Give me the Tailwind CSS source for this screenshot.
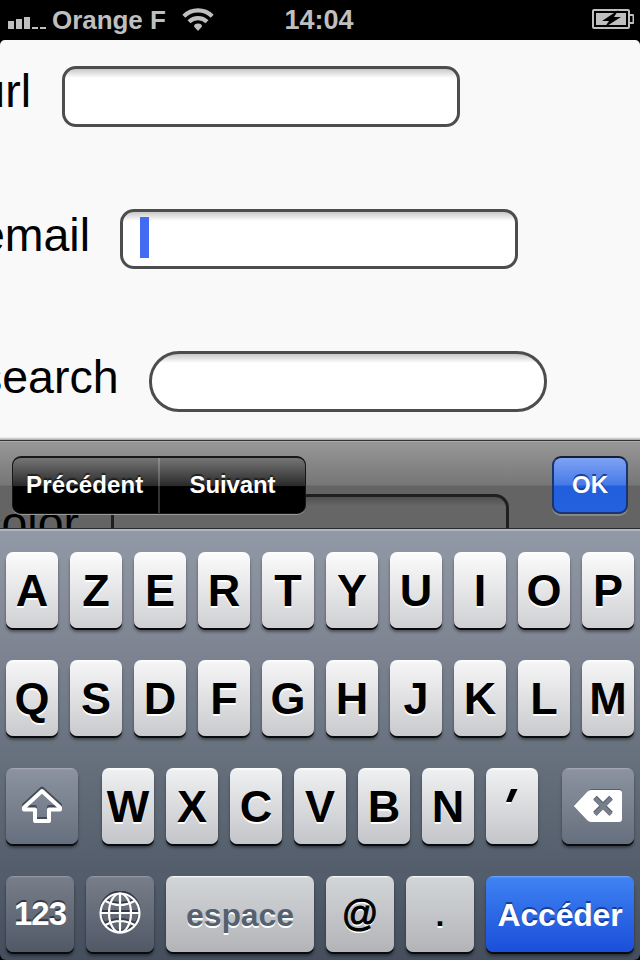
<!DOCTYPE html>
<html lang="fr">
<head>
<meta charset="utf-8">
<title>Formulaire</title>
<script src="https://cdn.jsdelivr.net/npm/@tailwindcss/browser@4"></script>
</head>
<body class="bg-black">
<div class="w-[640px] h-[960px] overflow-hidden flex flex-col bg-black font-['Liberation_Sans',Arial,sans-serif]">

  <!-- Status bar -->
  <header class="h-10 shrink-0 grid grid-cols-[1fr_auto_1fr] items-center text-[#bfbfbf] font-bold text-[26px] leading-10">
    <div class="flex items-center pl-2">
      <svg class="w-[38px] h-[12px] mt-[6px] shrink-0" viewBox="0 0 38 12" fill="#bfbfbf"><path d="M0 4h6v8H0zM8 2h6v10H8zM16 0h6v12h-6zM24 10h6v2h-6zM32 10h6v2h-6z"/></svg>
      <span class="ml-[6px] whitespace-nowrap tracking-[-0.05px]">Orange F</span>
      <svg class="w-[32px] h-[24px] ml-4 mt-[-3px] shrink-0" viewBox="0 0 32 24"><g fill="none" stroke="#bfbfbf" stroke-width="4.200"><path d="M1.800 9.200a20.200 20.200 0 0 1 28.400 0"/><path d="M7 14.800a12.800 12.800 0 0 1 18 0"/></g><path fill="#bfbfbf" d="M12 19.600Q12 16.500 16 16.500T20 19.600L16 24z"/></svg>
    </div>
    <span class="text-[27px] -ml-[2px]">14:04</span>
    <svg class="w-[42px] h-5 justify-self-end mr-[6px] mt-[-2px]" viewBox="0 0 42 20"><rect x="1" y="1" width="36" height="18" rx="1" fill="none" stroke="#bfbfbf" stroke-width="2"/><path d="M38 6h2.500q1 0 1 1v6q0 1-1 1H38" fill="none" stroke="#bfbfbf" stroke-width="2"/><path d="M4 4h30v12H4z" fill="#bfbfbf"/><path d="M26.500 1L10 12h7L12.500 18.500 29 8h-7z" fill="#000"/></svg>
  </header>

  <!-- Web page -->
  <main class="relative h-[488px] shrink-0 overflow-hidden rounded-t-[5px] bg-[#f9f9f9] text-[46.500px] leading-[54px] text-black">
    <div class="flex flex-col gap-[81.500px] pt-[26px]">
      <div class="flex items-start h-[61px]"><div class="w-[31px] shrink-0 flex justify-end -mt-[2px]"><span class="shrink-0">url</span></div><div class="ml-[30.500px] w-[398px] h-[60.500px] rounded-[14px] border-[3px] border-[#4d4d4d] bg-[linear-gradient(#c8c8c8,#fff_9px)]"></div></div>
      <div class="flex items-start h-[61px]"><div class="w-[90px] shrink-0 flex justify-end -mt-[1px]"><span class="shrink-0">email</span></div><div class="ml-[29.500px] w-[398px] h-[60.500px] rounded-[14px] border-[3px] border-[#4d4d4d] bg-[linear-gradient(#c8c8c8,#fff_9px)] pt-[5px] pl-[17px]"><div class="w-[9px] h-[41px] bg-[#426bf2]"></div></div></div>
      <div class="flex items-start h-[61px]"><div class="w-[118.500px] shrink-0 flex justify-end -mt-[1px]"><span class="shrink-0">search</span></div><div class="ml-[30px] w-[398px] h-[60.500px] rounded-[30px] border-[3px] border-[#4d4d4d] bg-[linear-gradient(#c8c8c8,#fff_9px)]"></div></div>
      <div class="flex items-start h-[61px]"><div class="w-[79px] shrink-0 flex justify-end pt-[2px]"><span class="shrink-0">color</span></div><div class="ml-[32px] w-[398px] h-[61px] rounded-[14px] border-[3px] border-[#4d4d4d] bg-[linear-gradient(#c8c8c8,#fff_9px)]"></div></div>
    </div>

    <!-- Translucent form assistant -->
    <div class="absolute inset-x-0 bottom-0 h-[91px] pt-[3px] bg-[linear-gradient(transparent,rgba(0,0,0,.35)_3px,transparent_3px)]">
      <div class="relative h-[88px] flex items-start justify-between pt-4 px-3 text-white font-bold text-[24px] border-t border-[#333] bg-[linear-gradient(rgba(148,148,148,.97)_1px,rgba(108,108,108,.93)_44px,rgba(0,0,0,.6)_45px)]">
        <div class="absolute inset-x-0 top-0 h-px bg-white/20"></div>
        <div class="relative flex -mt-px w-[294px] h-[58px] rounded-[9px] border border-t-2 border-[#171717] overflow-hidden bg-[linear-gradient(#757575,#2b2b2b_50%,#000_52%,#000)] [text-shadow:0_-2px_1px_#0008] shadow-[0_1px_0_#999]">
          <div class="w-[147px] border-r-2 border-white/20 pl-[13px] tracking-[0.15px] leading-[54px]">Précédent</div>
          <div class="flex-1 text-center leading-[54px] tracking-[-0.1px]">Suivant</div>
        </div>
        <div class="relative -mt-px w-[76px] h-[58px] rounded-[9px] border-2 border-[#19356f] border-t-[#151e33] bg-[linear-gradient(#7fa3f4,#4679e7_50%,#215fdd_52%,#2461df)] text-center leading-[54px] shadow-[0_2px_0_#888] [text-shadow:0_-2px_0_#1b4098]">OK</div>
      </div>
    </div>
  </main>

  <!-- Keyboard -->
  <section class="relative h-[432px] shrink-0 rounded-b-[6px] border-t border-[#292c31] bg-[linear-gradient(#b0b6c0_0,#b0b6c0_2px,#9299a6_2px,#7c8290_30%,#69737f_50%,#444e5d)] px-[6px] pt-[23px] flex flex-col gap-8 font-bold text-[45px] leading-[78px] text-center text-black [text-shadow:0_2px_0_#fff]">
    <div class="grid grid-cols-10 gap-3 *:h-[76px] *:rounded-[7px] *:bg-[linear-gradient(#fff,#fafafa_3px,#cfd0d3)] *:shadow-[0_2px_0_#080a0e,0_4px_3px_#0006]"><div>A</div><div>Z</div><div>E</div><div>R</div><div>T</div><div>Y</div><div>U</div><div>I</div><div>O</div><div>P</div></div>
    <div class="grid grid-cols-10 gap-3 *:h-[76px] *:rounded-[7px] *:bg-[linear-gradient(#fff,#f5f5f6_3px,#c9cacd)] *:shadow-[0_2px_0_#080a0e,0_4px_3px_#0006]"><div>Q</div><div>S</div><div>D</div><div>F</div><div>G</div><div>H</div><div>J</div><div>K</div><div>L</div><div>M</div></div>
    <div class="flex justify-between *:h-[76px] *:rounded-[7px] *:shadow-[0_2px_0_#080a0e,0_4px_3px_#0006]">
      <div class="w-[72px] bg-[linear-gradient(#a8adb8,#8c929f_2px,#666f7e)] flex items-center justify-center">
        <svg class="w-[44px] h-[40px]" viewBox="0 0 44 40"><g fill="none" stroke-width="4" stroke-linejoin="round"><path stroke="#454c59" d="M22 2.500L4 19v2h11v12h14V21h11v-2z"/><path stroke="#fff" d="M22 5L4 21.500v2h11v11.500h14V23.500h11v-2z"/></g></svg>
      </div>
      <div class="!shadow-none flex gap-3 *:w-[52px] *:h-[76px] *:rounded-[7px] *:bg-[linear-gradient(#fff,#eeeff0_3px,#c4c5c9)] *:shadow-[0_2px_0_#080a0e,0_4px_3px_#0006]"><div>W</div><div>X</div><div>C</div><div>V</div><div>B</div><div>N</div><div class="flex justify-center items-start pt-[21px]"><svg class="w-[14px] h-[16px]" viewBox="0 0 14 16"><path fill="#fff" d="M1 12h5v3H1z"/><path d="M6 0h6.500L6.500 13H1z"/></svg></div></div>
      <div class="w-[72px] bg-[linear-gradient(#a8adb8,#8c929f_2px,#666f7e)] flex items-center justify-center">
        <svg class="w-[50px] h-[36px]" viewBox="0 0 50 36"><path fill="#555c69" d="M1 17L15 3q2-2 4-2h27q3 0 3 3v10z"/><path fill="#fff" d="M.800 18L14 4q2-2 4-2h28q3 0 3 3v26q0 3-3 3H18q-2 0-4-2z"/><path fill="none" stroke="#555c69" stroke-width="5" d="M22 9.500l16 16M38 9.500L22 25.500"/><path fill="none" stroke="#777e8c" stroke-width="4.500" d="M22 10.500l16 16M38 10.500L22 26.500"/></svg>
      </div>
    </div>
    <div class="grid grid-cols-[68px_68px_148px_68px_68px_148px] gap-3 leading-[78px] text-[33px] *:h-[76px] *:rounded-[7px] *:shadow-[0_2px_0_#080a0e,0_4px_3px_#0006]">
      <div class="bg-[linear-gradient(#989da8,#777d89_2px,#515967)] text-white [text-shadow:0_-2px_0_#343a45] text-[33px] tracking-[-1px] leading-[76px]">123</div>
      <div class="bg-[linear-gradient(#989da8,#777d89_2px,#515967)] flex items-center justify-center">
        <svg class="w-[44px] h-[44px] -mt-[2px]" viewBox="0 0 44 44" fill="none"><g stroke="#353b46" stroke-width="2.200" transform="translate(0 -2)"><circle cx="22" cy="22" r="19.500"/><path d="M2.500 22h39M7 10q15 8 30 0M7 34q15-8 30 0"/></g><g stroke="#fff" stroke-width="2.200"><circle cx="22" cy="22" r="19.500"/><ellipse cx="22" cy="22" rx="11" ry="19.500"/><path d="M22 2.500v39M2.500 22h39M7.500 10q14.500 8 29 0M7.500 34q14.500-8 29 0"/></g></svg>
      </div>
      <div class="bg-[linear-gradient(#fff,#d2d5d7_2px,#b3b4b8)] text-[#566170] text-[32px] tracking-[-0.1px]">espace</div>
      <div class="bg-[linear-gradient(#fff,#d2d5d7_2px,#b3b4b8)] font-normal text-[36px] leading-[76px] [-webkit-text-stroke:1px_#000]">@</div>
      <div class="bg-[linear-gradient(#fff,#d2d5d7_2px,#b3b4b8)] text-[32px]">.</div>
      <div class="bg-[linear-gradient(#75a9fa,#3e82f3_2px,#1b4ed9)] text-white [text-shadow:0_-2px_0_#183d91] text-[32px] tracking-[-0.2px]">Accéder</div>
    </div>
  </section>
</div>
</body>
</html>
